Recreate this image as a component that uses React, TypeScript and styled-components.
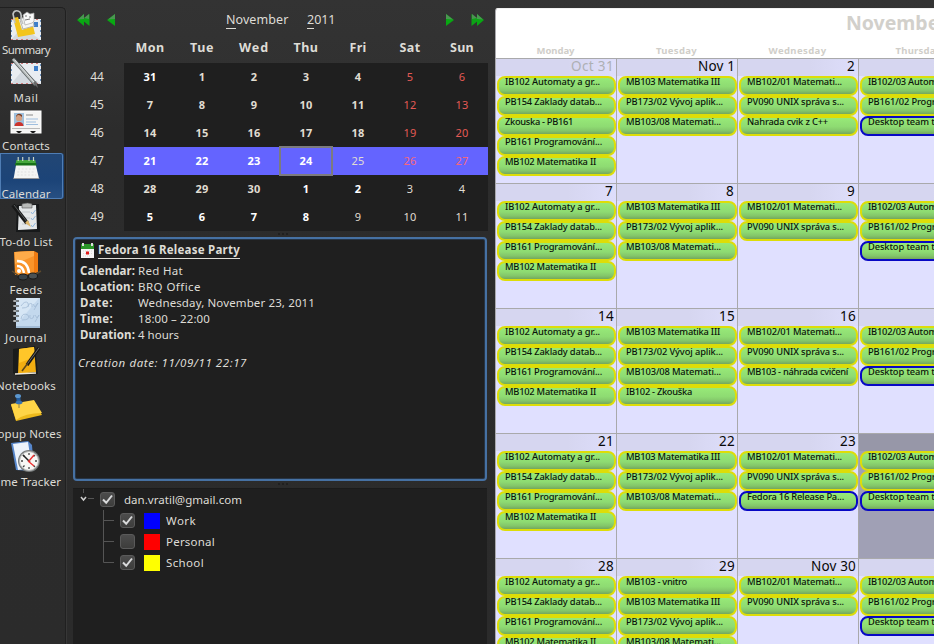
import React, { useLayoutEffect, useRef, useState } from 'react';
import styled, { createGlobalStyle, css } from 'styled-components';

const Global = createGlobalStyle`
  *, *::before, *::after { box-sizing: border-box; }
  body { margin: 0; overflow: hidden; background: #2d2d2d; font-family: 'Noto Sans', 'Open Sans', sans-serif; color: #dedcd6; }
`;

const FitSpan = styled.span`
  display: inline-block;
  white-space: pre;
`;

/* Spreads or tightens the letters so that the text takes the given width. */
function Fit({ width, children }: { width: number; children: string }) {
  const ref = useRef<HTMLSpanElement>(null);
  const [spacing, setSpacing] = useState(0);
  useLayoutEffect(() => {
    if (ref.current) {
      const natural = ref.current.getBoundingClientRect().width;
      setSpacing((width - natural) / children.length);
    }
  }, [width, children]);
  return <FitSpan ref={ref} style={{ letterSpacing: `${spacing}px` }}>{children}</FitSpan>;
}

const Window = styled.div`
  display: flex;
  width: 934px;
  height: 644px;
  overflow: hidden;
  background: linear-gradient(#333333 0, #313131 70px, #2c2c2c 130px, #2b2b2b 100%);
`;

/* ---------- sidebar ---------- */
const Sidebar = styled.nav`
  width: 66px;
  height: 637px;
  margin-top: 7px;
  padding-top: 2px;
  flex: none;
  border: 1px solid #202020;
  border-width: 1px 1px 0 0;
  border-radius: 0 5px 0 0;
  box-shadow: 1px 0 0 #373737;
`;
const SideItem = styled.div<{ $active?: boolean }>`
  display: flex;
  flex-direction: column;
  align-items: center;
  width: 64px;
  height: 48px;
  margin-top: -1px;
  margin-bottom: 1px;
  padding: 0 11px 0 0;
  border: 1px solid transparent;
  border-width: 0 1px 0 0;
  svg { display: block; flex: none; }
  ${p => p.$active && css`
    border-radius: 0 3px 3px 0;
    background: linear-gradient(#224674, #1c4478 60%, #285083);
    box-shadow: inset 0 0 0 1px #4f7db4;
    height: 46px;
    margin-bottom: 3px;
  `}
`;
const SideLabel = styled.div`
  display: flex;
  justify-content: center;
  height: 15px;
  margin-top: 1px;
  font-size: 11.5px;
  line-height: 15px;
`;

const Envelope = () => (
  <g>
    <rect x="1" y="0" width="30" height="21" fill="#e9edf1" />
    <path d="M1 21L12 8L31 21Z" fill="#d4dae0" />
    <path d="M1 .5H31M1 20.5H31" stroke="#d07c7c" strokeDasharray="2 3" />
    <path d="M1.5 1V21M30.5 1V21" stroke="#6f92bd" strokeDasharray="2 3" />
    <rect x="24" y="3" width="4" height="5" fill="#3f7fc9" />
  </g>
);
const icons: Record<string, React.ReactNode> = {
  summary: <>
    <g transform="translate(0 10)"><Envelope /></g>
    <path d="M3 9L8 8L12 21L23 17L25 25L8 28Z" fill="#f3c51d" />
    <path d="M10 11L15 7L22 9L24 17L13 20Z" fill="#f5f6f4" stroke="#b7b7b3" />
    <path d="M13 6L17 3L20 5L24 4V12L22 14L15 16Z" fill="#fafafa" stroke="#a8a8a8" strokeWidth=".7" />
    <path d="M5 14L3 5Q4 1 8 2Q12 3 11 10L13 15" fill="none" stroke="#c1c4c4" strokeWidth="1.6" />
    <path d="M15 7h2M19 8h2M15 11l5-1" stroke="#777" />
  </>,
  mail: <>
    <g transform="translate(0 6)"><Envelope /></g>
    <path d="M3 2L26 28" stroke="#555b5c" strokeWidth="4" />
    <path d="M3 2L25 27" stroke="#b9bfbf" strokeWidth="2.4" />
    <path d="M5 3L24 25" stroke="#eceeed" strokeWidth=".8" />
    <path d="M23 26L28 31L26 24Z" fill="#686868" />
  </>,
  contacts: <>
    <rect x="1" y="6" width="30" height="22" fill="#f5f5f4" stroke="#fff" />
    <rect x="4" y="8" width="10" height="13" fill="#9fc0dd" />
    <circle cx="9" cy="13" r="3.2" fill="#d3a083" />
    <path d="M6 12Q8 8 12 12L12 10Q8 7 6 11Z" fill="#7b3e24" />
    <path d="M4.500 21Q5 17 9 17Q13 17 13.500 21Z" fill="#cc342d" />
    <path d="M16 10h7" stroke="#888" /><path d="M16 14h12M16 17h10M16 19.500h12" stroke="#9fbede" />
    <path d="M2 23.500H30" stroke="#b9b9b9" />
    <path d="M6 26h6l-2 2H8zM20 26h6l-2 2h-2z" fill="#1b1b1b" />
  </>,
  calendar: <g transform="translate(1 0) scale(.9 1)">
    <path d="M6 10H27L31 25H3Z" fill="#f4f5f3" />
    <path d="M6 7H27L28 12H5Z" fill="#46a83c" /><path d="M5 10H28L28.500 12.500H4.500Z" fill="#187218" />
    <path d="M8 8V4M13 8V4M20 8V4M25 8V4" stroke="#cbd5c9" strokeWidth="1.3" />
    <path d="M8 16H26M7 19H27M7 22H28" stroke="#dededd" strokeDasharray="2 2" />
    <path d="M2.500 25.500H31.500" stroke="#9a9a9a" />
  </g>,
  todo: <>
    <path d="M7 4L29 3L30 31H6Z" fill="#17191a" />
    <path d="M9 5L26 4L27 28L8 29Z" fill="#e4e7e8" />
    <path d="M12 3Q18 1 22 3V7H12Z" fill="#b8bab8" stroke="#555" strokeWidth=".6" />
    <path d="M12 11H20M12 17H20M12 23H20" stroke="#c4c8ca" />
    <path d="M21 11l1.500 2 3-4M21 17l1.500 2 3-4M21 24l1.500 2 3-4" fill="none" stroke="#8db5dd" strokeWidth="1" />
    <path d="M3 4L17 22" stroke="#181818" strokeWidth="4" /><path d="M4 4L17 21" stroke="#55595a" strokeWidth="1" />
    <path d="M15 22L18 19L21 26Z" fill="#ddb66b" />
  </>,
  feeds: <>
    <path d="M5 3L24 2L28 4V23L24 25L5 26Z" fill="#ef7b12" /><path d="M4 3L24 2L24 25L5 26Z" fill="#f9942a" />
    <path d="M5 3L24 2L24 7L5 15Z" fill="#ffab49" />
    <circle cx="9" cy="22" r="2" fill="#fff" />
    <path d="M7 17Q13 17 14 24M7 12Q18 12 19 24" fill="none" stroke="#fff" strokeWidth="2.500" />
    <path d="M2 22L9 27M31 22L24 26" stroke="#5d4a2e" strokeWidth="1.500" />
    <ellipse cx="13" cy="28" rx="5" ry="3" fill="#38434a" stroke="#181818" /><ellipse cx="23" cy="27" rx="4.500" ry="3" fill="#4a5154" stroke="#181818" />
  </>,
  journal: <>
    <path d="M6 1H30V31H6Z" fill="#c3d8ed" /><path d="M7 1H29L8 26Z" fill="#d6e6f5" />
    <path d="M6 30H30" stroke="#82a0bf" />
    <path d="M11 9q4-6 7-3q2 5-6 5M18 10q1-5 4-3v3M23 7l2 3 3-4-4 7M11 22q1-7 7-4q3 5-6 5M20 18q-1 5 3 3l1-3M25 18l2 3 2-3-4 7" fill="none" stroke="#a3bbd5" strokeWidth=".8" />
    <path d="M4 4h5M4 9h5M4 14h5M4 19h5M4 24h5" stroke="#777f85" strokeWidth="2" /><path d="M3 4h3M3 9h3M3 14h3M3 19h3M3 24h3" stroke="#ddd" />
  </>,
  notebooks: <>
    <path d="M3 4L25 1L28 29L7 31L3 28Z" fill="#191b1b" />
    <path d="M9 4L24 2L26 27L8 29Z" fill="#f2ae11" /><path d="M9 4L24 2L25 12L9 18Z" fill="#ffc629" />
    <path d="M5 29L26 28" stroke="#eee8da" strokeWidth="1.5" />
    <path d="M29 3L17 20" stroke="#171717" strokeWidth="3.300" /><path d="M29 3L18 18" stroke="#686868" />
    <path d="M18 18L12 26" stroke="#5d461c" strokeWidth="1.500" />
  </>,
  popup: <>
    <path d="M1 12L24 8L32 22L6 28Z" fill="#edb91b" /><path d="M1 11L24 7L32 20Q15 20 6 27Z" fill="#ffd547" />
    <path d="M6 3L10 2L11 10L7 11Z" fill="#235d9e" /><ellipse cx="8" cy="3" rx="3" ry="2" fill="#5c97ce" />
    <ellipse cx="9" cy="9.500" rx="3.500" ry="1.800" fill="#3671af" /><path d="M9 11v4" stroke="#8c7e4c" />
  </>,
  time: <>
    <path d="M1 2L18 0L22 4L24 30L6 29Z" fill="#5686cb" /><path d="M3 3L18 1L22 27L8 29Z" fill="#edf3fb" />
    <circle cx="19" cy="20" r="11" fill="#777b7b" /><circle cx="19" cy="20" r="9.500" fill="#f7f7f5" stroke="#b5b7b7" />
    <path d="M19 12v2M19 26v2M11 20h2M25 20h2M13 14l1.500 1.500M25 14l-1.500 1.500M13 26l1.500-1.500M25 26l-1.500-1.500" stroke="#444" strokeWidth="1.300" />
    <path d="M20 21L13 14" stroke="#222" strokeWidth="1.500" /><path d="M19 20L24 14M18 20L24 25" stroke="#e33" strokeWidth="1.400" />
  </>,
};
const sideItems: [string, string, number][] = [
  ['summary', 'Summary', 48], ['mail', 'Mail', 25], ['contacts', 'Contacts', 48], ['calendar', 'Calendar', 49],
  ['todo', 'To-do List', 53], ['feeds', 'Feeds', 33], ['journal', 'Journal', 42], ['notebooks', 'Notebooks', 60],
  ['popup', 'Popup Notes', 71], ['time', 'Time Tracker', 70],
];

/* ---------- middle column ---------- */
const Middle = styled.div`
  display: flex;
  flex-direction: column;
  flex: none;
  width: 422px;
  margin-left: 7px;
`;
const DateBar = styled.div`
  display: flex;
  align-items: center;
  height: 27px;
  margin-top: 6px;
  padding-left: 4px;
  font-size: 12.500px;
  line-height: 27px;
  svg { flex: none; }
`;
const MonthName = styled.div` width: 63px; margin-left: 110px; `;
const YearName = styled.div` width: 29px; margin-left: 18px; `;
const Under = styled.span`
  display: inline-block;
  line-height: 16px;
  border-bottom: 1px solid #dedcd6;
`;
const Gap = styled.div<{ $w: number }>` width: ${p => p.$w}px; flex: none; `;

const MiniGrid = styled.div`
  display: grid;
  grid-template-columns: 51px repeat(7, 52px);
  grid-template-rows: 30px repeat(6, 28px);
  width: 415px;
`;
const MiniHead = styled.div`
  display: flex;
  align-items: center;
  justify-content: center;
  padding-bottom: 2px;
  font-size: 12.500px;
  font-weight: 700;
`;
const WeekNo = styled.div`
  display: flex;
  align-items: center;
  justify-content: center;
  font-size: 12px;
  padding: 0 3px 2px 0;
`;
type DayProps = { $bold?: boolean; $tone: 'dim' | 'white' | 'red'; $sel?: boolean; $today?: boolean };
const tones = { dim: '#e0ddd2', white: '#ffffff', red: '#e45a55' };
const Day = styled.div<DayProps>`
  display: flex;
  align-items: center;
  justify-content: center;
  padding-bottom: 1.5px;
  font-size: 11px;
  letter-spacing: ${p => (p.$bold ? 0.2 : 0.3)}px;
  font-weight: ${p => (p.$bold ? 700 : 400)};
  background: ${p => (p.$sel ? '#6464ff' : '#1f1f1f')};
  color: ${p => (p.$sel && p.$tone === 'red' ? '#f5687c' : tones[p.$tone])};
  ${p => p.$today && css` outline: 2px solid #7c7b7d; outline-offset: -1px; z-index: 1; `}
`;

const Splitter = styled.div`
  display: flex;
  gap: 2px;
  align-items: center;
  justify-content: center;
  height: 6px;
  width: 420px;
  i { width: 2px; height: 2px; background: #202020; }
`;

const Details = styled.section`
  width: 414px;
  height: 244px;
  padding: 3px 5px 0 5px;
  border: 2px solid #4671a3;
  border-radius: 4px;
  background: #1f1f1f;
  box-shadow: inset 0 0 0 1px #263445;
  font-size: 11.500px;
  line-height: 16px;
`;
const TitleRow = styled.div`
  display: flex;
  align-items: flex-end;
  height: 17px;
  svg { flex: none; margin-right: 3px; margin-bottom: 1px; }
`;
const EventTitle = styled.div`
  border-bottom: 1px solid #dedcd6;
  height: 17px;
  line-height: 16px;
  font-weight: 700;
`;
const Facts = styled.dl`
  display: grid;
  grid-template-columns: 58px auto;
  grid-auto-rows: 16px;
  margin: 4px 0 0;
  dt { font-weight: 700; }
  dd { margin: 0; }
`;
const Created = styled.div`
  margin: 12px 0 0 -2px;
  font-style: italic;
`;

const Tree = styled.section`
  width: 414px;
  flex: 1;
  margin-top: 1px;
  padding: 0 0 0 4px;
  background: #1f1f1f;
  border-top: 1px solid #1b1b1b;
  font-size: 11.500px;
`;
const TreeRow = styled.div`
  display: flex;
  align-items: center;
  height: 21px;
  svg { flex: none; }
`;
const Box = styled.div`
  display: flex;
  align-items: center;
  justify-content: center;
  width: 15px;
  height: 15px;
  flex: none;
  border: 1px solid #5a5a5a;
  border-radius: 3px;
  background: linear-gradient(#4c4c4c, #3d3d3c);
`;
const Swatch = styled.div<{ $color: string }>`
  width: 16px;
  height: 16px;
  flex: none;
  margin: 0 6px 0 9px;
  background: ${p => p.$color};
`;
const Check = () => (
  <Box><svg width="13" height="13" viewBox="0 0 13 13"><path d="M2 6.500L5.200 9.800L11 2.500" fill="none" stroke="#d9dadb" strokeWidth="2" /></svg></Box>
);

/* ---------- month view ---------- */
const Month = styled.main`
  width: 450px;
  height: 636px;
  flex: none;
  margin-top: 8px;
  border-left: 1px solid #aaa9ad;
  border-top: 1px solid #f1f1f1;
  border-radius: 3px 0 0 0;
  background: #fff;
`;
const MonthTitle = styled.div`
  height: 33px;
  padding: 1px 0 0 350px;
  color: #d2d0cb;
  font-weight: 700;
  font-size: 19.500px;
  line-height: 26px;
  overflow: hidden;
`;
const Weekdays = styled.div`
  display: grid;
  grid-template-columns: repeat(4, 121px);
  height: 16px;
  color: #d0cec9;
  font-size: 9.500px;
  line-height: 17px;
`;
const Weekday = styled.div`
  padding-right: 2px;
  font-weight: 700;
  text-align: center;
`;
const Weeks = styled.div`
  display: grid;
  grid-template-columns: repeat(4, 121px);
  grid-auto-rows: 125px;
`;
const Cell = styled.div<{ $today?: boolean }>`
  border-top: 1px solid #a9a9ab;
  border-right: 1px solid #a9a9ab;
  background: ${p => (p.$today ? '#a0a0b5' : '#e0e0ff')};
  overflow: hidden;
`;
const CellDate = styled.div<{ $muted?: boolean; $today?: boolean }>`
  height: 17px;
  padding-right: 2px;
  background: ${p => (p.$today ? '#9797a8' : 'linear-gradient(90deg, #d6d6f0 60%, #dedefb)')};
  color: ${p => (p.$muted ? '#aeb0b4' : '#080808')};
  font-size: 13.500px;
  line-height: 15px;
  text-align: right;
`;
const Pill = styled.div<{ $blue?: boolean }>`
  width: 119px;
  height: 20px;
  margin-left: 1px;
  padding-left: 6px;
  border: 2px solid ${p => (p.$blue ? '#0808c4' : '#dddd08')};
  border-radius: 8px;
  background: linear-gradient(#97e978, #8edb72 55%, #83c66a 80%, #74a75d);
  color: #0c140a;
  font-size: 9.300px;
  font-weight: 500;
  line-height: 8px;
  white-space: nowrap;
`;

const W: Record<string, number> = {
  'IB102 Automaty a gr...': 95, 'PB154 Zaklady datab...': 97, 'Zkouska - PB161': 68, 'PB161 Programování...': 97,
  'MB102 Matematika II': 91, 'MB103 Matematika III': 94, 'PB173/02 Vývoj aplik...': 97, 'MB103/08 Matemati...': 95,
  'MB102/01 Matemati...': 95, 'PV090 UNIX správa s...': 97, 'Nahrada cvik z C++': 81, 'IB102/03 Autom...': 76,
  'PB161/02 Progra...': 80, 'Desktop team t...': 74, 'MB103 - vnitro': 61, 'MB103 - náhrada cvičení': 101,
  'Fedora 16 Release Pa...': 97, 'IB102 - Zkouška': 66,
};
const mon = ['IB102 Automaty a gr...', 'PB154 Zaklady datab...', 'PB161 Programování...', 'MB102 Matematika II'];
const tue = ['MB103 Matematika III', 'PB173/02 Vývoj aplik...', 'MB103/08 Matemati...'];
const wed = ['MB102/01 Matemati...', 'PV090 UNIX správa s...'];
const thu = ['IB102/03 Autom...', 'PB161/02 Progra...', 'Desktop team t...'];
const cells: { date: string; w: number; ev: string[]; muted?: boolean; today?: boolean }[] = [
  { date: 'Oct 31', w: 43, muted: true, ev: [mon[0], mon[1], 'Zkouska - PB161', mon[2], mon[3]] },
  { date: 'Nov 1', w: 37, ev: tue },
  { date: '2', w: 9, ev: [...wed, 'Nahrada cvik z C++'] },
  { date: '3', w: 9, ev: thu },
  { date: '7', w: 9, ev: mon }, { date: '8', w: 9, ev: tue }, { date: '9', w: 9, ev: wed }, { date: '10', w: 16, ev: thu },
  { date: '14', w: 16, ev: mon }, { date: '15', w: 16, ev: [...tue, 'IB102 - Zkouška'] },
  { date: '16', w: 16, ev: [...wed, 'MB103 - náhrada cvičení'] }, { date: '17', w: 16, ev: thu },
  { date: '21', w: 16, ev: mon }, { date: '22', w: 16, ev: tue },
  { date: '23', w: 16, ev: [...wed, 'Fedora 16 Release Pa...'] }, { date: '24', w: 16, ev: thu, today: true },
  { date: '28', w: 16, ev: mon }, { date: '29', w: 16, ev: ['MB103 - vnitro', ...tue] },
  { date: 'Nov 30', w: 45, ev: wed }, { date: 'Dec 1', w: 37, ev: thu },
];

const weekdays: [string, number][] = [['Monday', 38], ['Tuesday', 41], ['Wednesday', 58], ['Thursday', 46]];
const days: [string, number][] = [['Mon', 29], ['Tue', 24], ['Wed', 30], ['Thu', 25], ['Fri', 17], ['Sat', 21], ['Sun', 24]];
const firstDays = [
  [31, 1, 2, 3, 4, 5, 6], [7, 8, 9, 10, 11, 12, 13], [14, 15, 16, 17, 18, 19, 20],
  [21, 22, 23, 24, 25, 26, 27], [28, 29, 30, 1, 2, 3, 4], [5, 6, 7, 8, 9, 10, 11],
];
function dayProps(r: number, c: number): DayProps {
  const next = (r === 4 && c > 2) || r === 5;
  const red = c > 4 && r < 4;
  const bold = c < 5 && !(r === 3 && c === 4) && !(r === 5 && c === 4);
  const white = bold && (next || r === 3 || (r === 0 && c === 0));
  return { $bold: bold, $tone: red ? 'red' : white ? 'white' : 'dim', $sel: r === 3, $today: r === 3 && c === 3 };
}

function Arrow({ double, right }: { double?: boolean; right?: boolean }) {
  const w = double ? 13 : 9;
  return (
    <svg width={w} height="14" viewBox={`0 0 ${w} 14`}>
      <g transform={right ? `translate(${w} 0) scale(-1 1)` : undefined}>
        {double && <path d="M5 7L12.500 1V13Z" fill="#0da316" />}
        <path d={double ? 'M0 7L7 1V13Z' : 'M0 7L8 1V13Z'} fill="#08a812" />
        <path d={double ? 'M1 6.500L7 1V6M7 5L12 1V6Z' : 'M1 6.500L8 1V6Z'} fill="#4b9652" />
      </g>
    </svg>
  );
}
const facts: [string, number, string, number][] = [
  ['Calendar:', 55, 'Red Hat', 45], ['Location:', 54, 'BRQ Office', 63], ['Date:', 33, 'Wednesday, November 23, 2011', 177],
  ['Time:', 33, '18:00 – 22:00', 72], ['Duration:', 55, '4 hours', 41],
];

export default function App() {
  return (
    <Window>
      <Global />
      <Sidebar>
        {sideItems.map(([id, label, w]) => (
          <SideItem key={id} $active={id === 'calendar'}>
            <svg width="32" height="32" viewBox="0 0 32 32">{icons[id]}</svg>
            <SideLabel><Fit width={w}>{label}</Fit></SideLabel>
          </SideItem>
        ))}
      </Sidebar>
      <Middle>
        <DateBar>
          <Arrow double /><Gap $w={17} /><Arrow />
          <MonthName><Under>N</Under><Fit width={53}>ovember</Fit></MonthName>
          <YearName><Under>2</Under><Fit width={21}>011</Fit></YearName>
          <Gap $w={109} /><Arrow right /><Gap $w={17} /><Arrow double right />
        </DateBar>
        <MiniGrid>
          <span />
          {days.map(([d, w]) => <MiniHead key={d}><Fit width={w}>{d}</Fit></MiniHead>)}
          {firstDays.map((row, r) => (
            <React.Fragment key={r}>
              <WeekNo>{44 + r}</WeekNo>
              {row.map((d, c) => <Day key={c} {...dayProps(r, c)}>{d}</Day>)}
            </React.Fragment>
          ))}
        </MiniGrid>
        <Splitter><i /><i /><i /></Splitter>
        <Details>
          <TitleRow>
            <svg width="15" height="15" viewBox="0 0 15 15">
              <rect x="1" y="1" width="13" height="14" fill="#f6f6f6" /><rect x="1" y="1" width="13" height="5" fill="#2b9528" />
              <path d="M3 3V0M12 3V0" stroke="#ddd" strokeWidth="2" />
              <path d="M3 8H13M3 10.500H13M3 13H11" stroke="#d8d8d8" strokeDasharray="1 1" />
              <rect x="6.500" y="9" width="2" height="2" fill="#fff" stroke="#e01818" />
            </svg>
            <EventTitle><Fit width={142}>Fedora 16 Release Party</Fit></EventTitle>
          </TitleRow>
          <Facts>
            {facts.map(([k, kw, v, vw]) => (
              <React.Fragment key={k}>
                <dt><Fit width={kw}>{k}</Fit></dt>
                <dd><Fit width={vw}>{v}</Fit></dd>
              </React.Fragment>
            ))}
          </Facts>
          <Created><Fit width={169}>Creation date: 11/09/11 22:17</Fit></Created>
        </Details>
        <Splitter><i /><i /><i /></Splitter>
        <Tree>
          <TreeRow>
            <svg width="23" height="21" viewBox="0 0 23 21">
              <path d="M6.500 0V4M11 9.500H17" stroke="#555" fill="none" />
              <path d="M4 8L6.500 11L9 8" stroke="#d0d0d0" strokeWidth="1.500" fill="none" />
            </svg>
            <Check /><Gap $w={9} /><Fit width={118}>dan.vratil@gmail.com</Fit>
          </TreeRow>
          {([['Work', '#0000ff', 30, true], ['Personal', '#ff0000', 49, false], ['School', '#ffff00', 38, true]] as const).map(([n, c, w, on], i) => (
            <TreeRow key={n}>
              <svg width="43" height="21" viewBox="0 0 43 21">
                <path d={`M26.500 0V${i === 2 ? 10.500 : 21}M26.500 10.500H37`} stroke="#555" fill="none" />
              </svg>
              {on ? <Check /> : <Box />}
              <Swatch $color={c} />
              <Fit width={w}>{n}</Fit>
            </TreeRow>
          ))}
        </Tree>
      </Middle>
      <Month>
        <MonthTitle><Fit width={102}>November</Fit></MonthTitle>
        <Weekdays>
          {weekdays.map(([d, w]) => <Weekday key={d}><Fit width={w}>{d}</Fit></Weekday>)}
        </Weekdays>
        <Weeks>
          {cells.map(c => (
            <Cell key={c.date} $today={c.today}>
              <CellDate $muted={c.muted} $today={c.today}><Fit width={c.w}>{c.date}</Fit></CellDate>
              {c.ev.map(e => (
                <Pill key={e} $blue={e.startsWith('Desktop') || e.startsWith('Fedora')}><Fit width={W[e]}>{e}</Fit></Pill>
              ))}
            </Cell>
          ))}
        </Weeks>
      </Month>
    </Window>
  );
}
